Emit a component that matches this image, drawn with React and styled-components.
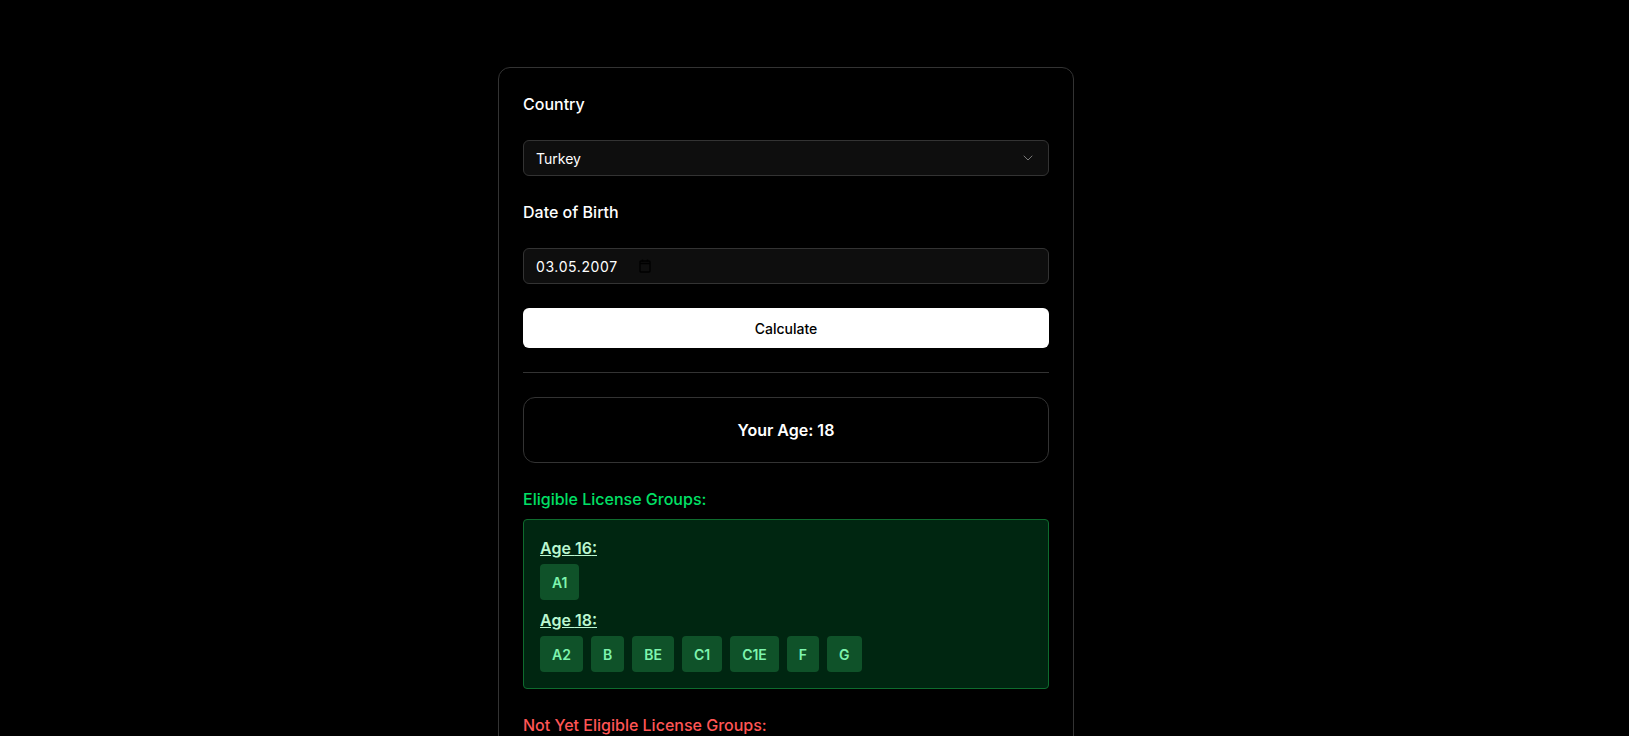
import styled, { createGlobalStyle } from "styled-components";
import { ChevronDown } from "lucide-react";

const Global = createGlobalStyle`
  html, body {
    margin: 0;
    background: #000;
    overflow: hidden;
  }
  * {
    box-sizing: border-box;
  }
  body {
    font-family: Inter, "Liberation Sans", sans-serif;
    color: #fff;
  }
`;

const Page = styled.div`
  display: flex;
  justify-content: center;
  padding: 67px 57px 0 0;
  height: 736px;
  overflow: hidden;
`;

const Card = styled.div`
  width: 576px;
  flex-shrink: 0;
  align-self: flex-start;
  display: flex;
  flex-direction: column;
  gap: 24px;
  padding: 24px;
  border: 1px solid #333;
  border-radius: 12px;
  background: #000;
`;

const Label = styled.div`
  font-size: 16px;
  font-weight: 500;
  line-height: 24px;
`;

const Field = styled.div`
  display: flex;
  align-items: center;
  justify-content: ${(p) => (p.$between ? "space-between" : "flex-start")};
  height: 36px;
  padding: 0 12px;
  background: #0e0e0e;
  border: 1px solid #333;
  border-radius: 6px;
  font-size: 14px;
  color: #fff;
`;

const DateText = styled.span`
  font-size: 14px;
  letter-spacing: 0.6px;
`;

const CalendarIcon = styled.svg`
  width: 14px;
  height: 14px;
  margin-left: 20px;
`;

const Chevron = styled(ChevronDown)`
  width: 16px;
  height: 16px;
  color: #777;
`;

const Submit = styled.button`
  height: 40px;
  border: none;
  border-radius: 6px;
  background: #fff;
  color: #000;
  font-family: inherit;
  font-size: 14px;
  font-weight: 500;
`;

const Divider = styled.div`
  height: 1px;
  background: #333;
`;

const AgeBox = styled.div`
  padding: 20px;
  border: 1px solid #333;
  border-radius: 12px;
  font-size: 16px;
  font-weight: 600;
  line-height: 24px;
  text-align: center;
`;

const Section = styled.div`
  display: flex;
  flex-direction: column;
  gap: 8px;
`;

const SectionTitle = styled.div`
  font-size: 16px;
  font-weight: 500;
  line-height: 24px;
  color: ${(p) => p.$color};
`;

const GroupBox = styled.div`
  display: flex;
  flex-direction: column;
  gap: 8px;
  padding: 16px;
  background: #002611;
  border: 1px solid #0e6b2e;
  border-radius: 4px;
`;

const Group = styled.div`
  display: flex;
  flex-direction: column;
  gap: 4px;
`;

const AgeTitle = styled.div`
  font-size: 16px;
  font-weight: 600;
  line-height: 24px;
  color: #bbf7d0;
  text-decoration: underline;
`;

const Badges = styled.div`
  display: flex;
  flex-wrap: wrap;
  gap: 8px;
`;

const Badge = styled.div`
  display: flex;
  align-items: center;
  height: 36px;
  padding: 0 12px;
  background: #0f5229;
  border-radius: 4px;
  font-size: 14px;
  font-weight: 600;
  color: #7df5ae;
`;

const groups = [
  { age: 16, licenses: ["A1"] },
  { age: 18, licenses: ["A2", "B", "BE", "C1", "C1E", "F", "G"] },
];

export default function App() {
  return (
    <>
      <Global />
      <Page>
        <Card>
          <Label>Country</Label>
          <Field $between>
            Turkey
            <Chevron strokeWidth={1.5} />
          </Field>
          <Label>Date of Birth</Label>
          <Field>
            <DateText>03.05.2007</DateText>
            <CalendarIcon viewBox="0 0 14 14" fill="none" stroke="#000" strokeWidth="1.4">
              <rect x="2" y="2" width="10" height="11" rx="1" />
              <path d="M2 4.5h10M4.5 .5v2M9.5 .5v2" />
            </CalendarIcon>
          </Field>
          <Submit>Calculate</Submit>
          <Divider />
          <AgeBox>Your Age: 18</AgeBox>
          <Section>
            <SectionTitle $color="#00e066">Eligible License Groups:</SectionTitle>
            <GroupBox>
              {groups.map((g) => (
                <Group key={g.age}>
                  <AgeTitle>Age {g.age}:</AgeTitle>
                  <Badges>
                    {g.licenses.map((l) => (
                      <Badge key={l}>{l}</Badge>
                    ))}
                  </Badges>
                </Group>
              ))}
            </GroupBox>
          </Section>
          <SectionTitle $color="#ff5555">Not Yet Eligible License Groups:</SectionTitle>
        </Card>
      </Page>
    </>
  );
}
